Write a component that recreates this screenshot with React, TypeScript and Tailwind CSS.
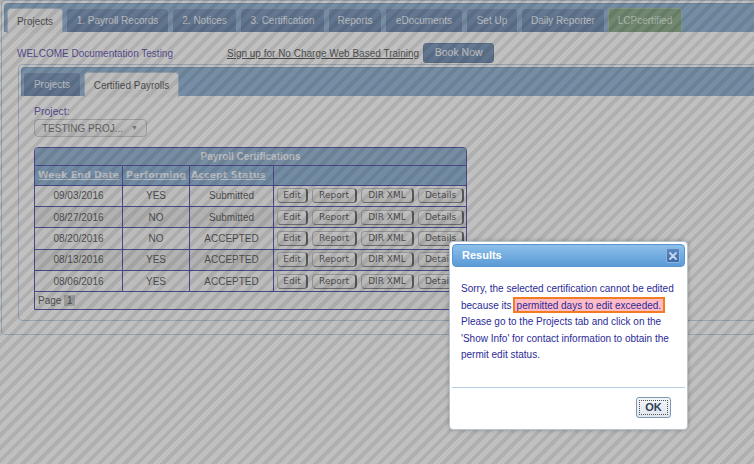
import React from 'react'

const topTabs = [
  { label: 'Projects', w: 'w-[56px]', active: true },
  { label: '1. Payroll Records', w: 'w-[103px]' },
  { label: '2. Notices', w: 'w-[65px]' },
  { label: '3. Certification', w: 'w-[85px]' },
  { label: 'Reports', w: 'w-[54px]' },
  { label: 'eDocuments', w: 'w-[78px]' },
  { label: 'Set Up', w: 'w-[52px]' },
  { label: 'Daily Reporter', w: 'w-[84px]' },
  { label: 'LCPcertified', w: 'w-[74px]', green: true },
]

const rows = [
  { date: '09/03/2016', perf: 'YES', status: 'Submitted' },
  { date: '08/27/2016', perf: 'NO', status: 'Submitted' },
  { date: '08/20/2016', perf: 'NO', status: 'ACCEPTED' },
  { date: '08/13/2016', perf: 'YES', status: 'ACCEPTED' },
  { date: '08/06/2016', perf: 'YES', status: 'ACCEPTED' },
]

function Tab({ label, w, active, green }: { label: string; w: string; active?: boolean; green?: boolean }) {
  if (active) {
    return (
      <div className={`${w} h-[25px] -mb-px flex items-center justify-center rounded-t-[4px] border border-b-0 border-[#9dbbd8] bg-[#f8f8f8] text-[10px] text-[#111]`}>
        {label}
      </div>
    )
  }
  if (green) {
    return (
      <div className={`${w} h-[24px] flex items-center justify-center rounded-t-[4px] border border-b-0 border-[#86a886] bg-[#5e8c5e] text-[10px] text-[#d8ecd8]`}>
        {label}
      </div>
    )
  }
  return (
    <div className={`${w} h-[24px] flex items-center justify-center rounded-t-[4px] border border-b-0 border-[#7598c0] bg-gradient-to-b from-[#4670a4] to-[#3a6296] text-[10px] text-[#f0f6ff]`}>
      {label}
    </div>
  )
}

function ActionButton({ label, w }: { label: string; w: string }) {
  return (
    <button className={`${w} h-[15px] rounded-[4px] border border-[#a8a8a8] border-r-2 border-r-[#2a2a2a] border-b-[#555] bg-gradient-to-b from-white to-[#e0e0e0] font-['DejaVu_Sans',Verdana,sans-serif] text-[9px] leading-none text-[#111]`}>
      {label}
    </button>
  )
}

export default function App() {
  return (
    <div className="relative w-[754px] h-[464px] overflow-hidden bg-white font-['Liberation_Sans',Arial,sans-serif]">
      {/* page under the modal */}
      <div className="ml-[1px] mr-[-8px] h-[335px] rounded-[4px] border border-[#a9c6e0] p-[2px]">
        {/* main tabs */}
        <div className="h-[29px] flex items-end gap-[3px] pl-[2px] rounded-t-[4px] border border-b-0 border-[#5686b4] bg-[#689ac8]">
          {topTabs.map((t) => (
            <Tab key={t.label} {...t} />
          ))}
        </div>

        {/* welcome row */}
        <div className="flex items-center h-[32px] pt-[11px] pb-[1px] pl-[13px]">
          <span className="w-[210px] text-[10px] text-[#2a0a99]">WELCOME Documentation Testing</span>
          <a className="text-[10px] text-[#111] underline">Sign up for No Charge Web Based Training</a>
          <button className="ml-[4px] h-[20px] w-[71px] rounded-[3px] border border-[#2f5688] bg-gradient-to-b from-[#4670a4] to-[#3a6296] text-[10.5px] text-white">
            Book Now
          </button>
        </div>

        {/* inner panel */}
        <div className="ml-[14px] h-[257px] rounded-[4px] border border-[#a9c6e0] p-[2px]">
          <div className="h-[29px] flex items-end gap-[3px] pl-[1px] rounded-t-[4px] border border-b-0 border-[#5686b4] bg-[#689ac8]">
            <Tab label="Projects" w="w-[58px]" />
            <Tab label="Certified Payrolls" w="w-[95px]" active />
          </div>

          <div className="pl-[13px] pt-[9px]">
            <div className="h-[12px] text-[10.5px] leading-[12px] text-[#2a0a99]">Project:</div>
            <div className="mt-[2px] flex h-[18px] w-[113px] items-center justify-between rounded-[4px] border border-[#b8b8b8] bg-gradient-to-b from-white to-[#ececec] pl-[7px] pr-[8px] text-[10px] text-[#444]">
              <span>TESTING PROJ...</span>
              <span className="text-[7px] text-[#666]">▼</span>
            </div>

            {/* certifications table */}
            <div className="mt-[10px] w-[433px] overflow-hidden rounded-t-[4px] border border-[#10108f]">
              <div className="flex h-[18px] items-center justify-center border-b border-[#10108f] bg-[#6c98c4] text-[10px] font-bold text-[#f4f8ff]">
                Payroll Certifications
              </div>
              <div className="grid h-[19.5px] grid-cols-[88px_67px_84px_192px] border-b border-[#10108f] bg-[#6396c8] font-['DejaVu_Sans',Verdana,sans-serif] text-[9.5px] font-bold text-[#eef4ff]">
                <div className="flex items-center whitespace-nowrap border-r border-[#10108f] pl-[3px] underline">Week End Date</div>
                <div className="flex items-center whitespace-nowrap border-r border-[#10108f] pl-[3px] underline">Performing</div>
                <div className="flex items-center whitespace-nowrap border-r border-[#10108f] pl-[1px] underline">Accept Status</div>
                <div />
              </div>
              {rows.map((r, i) => (
                <div
                  key={r.date}
                  className={`grid h-[21.4px] grid-cols-[88px_67px_84px_192px] border-b border-[#10108f] text-[10px] text-[#111] ${i % 2 === 1 ? 'bg-[#e2e2e2]' : 'bg-[#f6f6f6]'}`}
                >
                  <div className="flex items-center justify-center border-r border-[#10108f]">{r.date}</div>
                  <div className="flex items-center justify-center border-r border-[#10108f]">{r.perf}</div>
                  <div className="flex items-center justify-center border-r border-[#10108f]">{r.status}</div>
                  <div className="flex items-center gap-[4px] pl-[3px]">
                    <ActionButton label="Edit" w="w-[31px]" />
                    <ActionButton label="Report" w="w-[45px]" />
                    <ActionButton label="DIR XML" w="w-[53px]" />
                    <ActionButton label="Details" w="w-[46px]" />
                  </div>
                </div>
              ))}
              <div className="flex h-[16.5px] items-center gap-[3px] bg-[#f6f6f6] pl-[3px] text-[10px] text-[#111]">
                <span>Page</span>
                <span className="flex h-[11px] w-[11px] items-center justify-center bg-[#b6b6b6]">1</span>
              </div>
            </div>
          </div>
        </div>
      </div>

      {/* modal overlay */}
      <div className="absolute inset-0 bg-[image:repeating-linear-gradient(135deg,rgba(110,110,110,0.55)_0px,rgba(110,110,110,0.55)_4px,rgba(130,130,130,0.5)_4px,rgba(130,130,130,0.5)_9px)]" />

      {/* dialog */}
      <div className="absolute left-[449px] top-[241px] flex h-[189px] w-[239px] flex-col rounded-[4px] border border-[#b9c3cc] bg-white p-[2px] shadow-[0_0_4px_rgba(0,0,0,0.25)]">
        <div className="flex h-[23px] items-center justify-between rounded-[4px] border border-[#5b95cf] bg-gradient-to-b from-[#8cc0ea] to-[#5a9ad6] pl-[9px] pr-[4px]">
          <span className="text-[11px] font-bold text-white">Results</span>
          <span className="flex h-[15px] w-[14px] items-center justify-center rounded-[2px] border border-[#8fb3dc] bg-gradient-to-b from-[#5a88c2] to-[#3f6ca8]">
            <svg width="8" height="8" viewBox="0 0 8 8">
              <path d="M1 1L7 7M7 1L1 7" stroke="#c9d8ee" strokeWidth="1.8" strokeLinecap="round" />
            </svg>
          </span>
        </div>
        <div className="flex-1 pl-[9px] pt-[14px] text-[10px] leading-[16.5px] text-[#2b2b99] whitespace-nowrap">
          Sorry, the selected certification cannot be edited
          <br />
          because its
          <span className="ml-[1px] border-2 border-[#f47b20] bg-[#ffbcc6] px-[2px] py-[0.5px]">permitted days to edit exceeded.</span>
          <br />
          Please go to the Projects tab and click on the
          <br />
          'Show Info' for contact information to obtain the
          <br />
          permit edit status.
        </div>
        <div className="flex h-[40px] items-start justify-end border-t border-[#b6cde6] pr-[14px] pt-[9px]">
          <button className="flex h-[21px] w-[35px] items-center justify-center rounded-[3px] border border-[#7d97b5] bg-gradient-to-b from-[#f4f6f8] to-[#dfe6ee] p-[2px]">
            <span className="flex h-full w-full items-center justify-center border border-dotted border-[#555] text-[11px] font-bold text-[#2e4057]">
              OK
            </span>
          </button>
        </div>
      </div>
    </div>
  )
}
